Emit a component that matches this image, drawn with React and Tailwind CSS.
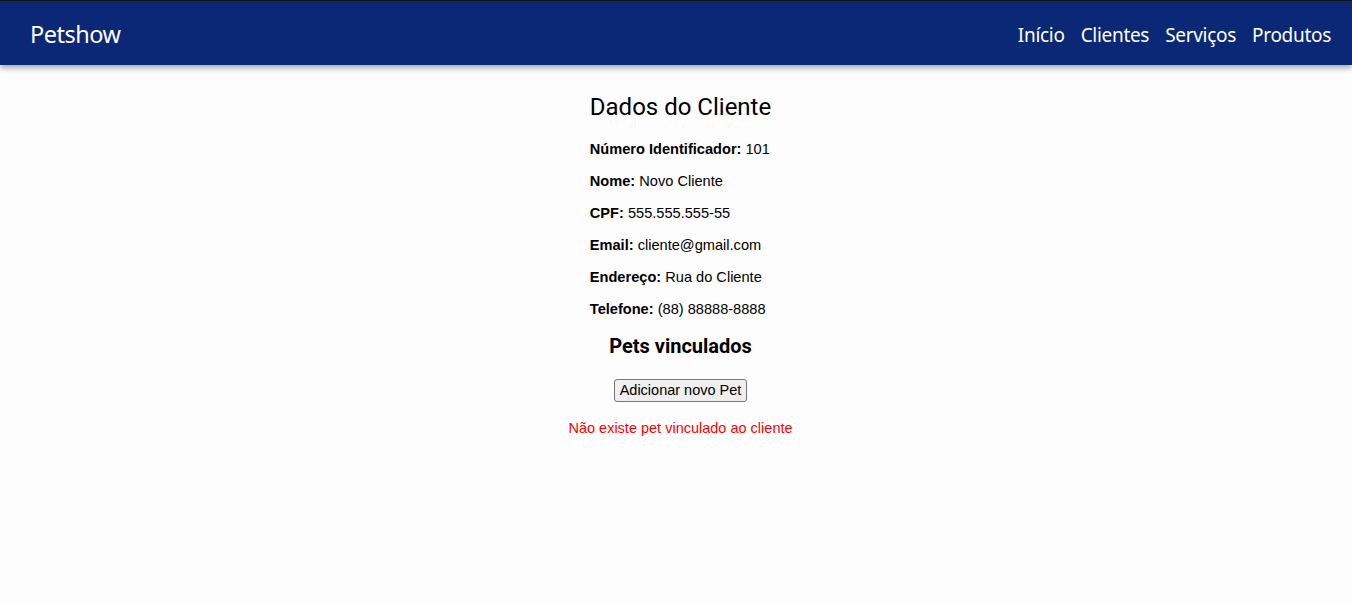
export default function App() {
  const rows = [
    ["Número Identificador:", "101"],
    ["Nome:", "Novo Cliente"],
    ["CPF:", "555.555.555-55"],
    ["Email:", "cliente@gmail.com"],
    ["Endereço:", "Rua do Cliente"],
    ["Telefone:", "(88) 88888-8888"],
  ];
  return (
    <div className="min-h-[604px] bg-[#fdfdfd] flex flex-col">
      <header className="h-[65px] bg-[#0a2875] border-t border-[#121212] flex items-center justify-between pt-[4px] pl-[30px] pr-[21px] shadow-[0_3px_6px_rgba(0,0,0,0.35)] relative z-10 font-['Noto_Sans',sans-serif] text-white">
        <span className="text-[23.5px] leading-none tracking-[-0.5px]">Petshow</span>
        <nav className="flex gap-[16px] text-[19px] leading-none tracking-[-0.3px]">
          <span>Início</span>
          <span>Clientes</span>
          <span>Serviços</span>
          <span>Produtos</span>
        </nav>
      </header>
      <main className="flex flex-col items-center pt-[28px] pl-[9px] text-black">
        <div className="w-fit flex flex-col">
          <h2 className="font-['Roboto',sans-serif] text-[24px] leading-[28px]">Dados do Cliente</h2>
          <div className="mt-[20px] flex flex-col gap-[16px] font-['Liberation_Sans',Arial,sans-serif] text-[14.6px] leading-[16px]">
            {rows.map(([k, v]) => (
              <p key={k}>
                <b>{k}</b> {v}
              </p>
            ))}
          </div>
        </div>
        <h3 className="mt-[18px] font-['Roboto',sans-serif] font-bold text-[20px] leading-[23px]">Pets vinculados</h3>
        <button className="mt-[21px] h-[23px] px-[5px] bg-[#efefef] border border-[#767676] rounded-[3px] font-['Liberation_Sans',Arial,sans-serif] text-[14.5px] leading-none text-black">
          Adicionar novo Pet
        </button>
        <p className="mt-[18px] font-['Liberation_Sans',Arial,sans-serif] text-[14.5px] leading-[16px] text-[#ff0000]">
          Não existe pet vinculado ao cliente
        </p>
      </main>
    </div>
  );
}
